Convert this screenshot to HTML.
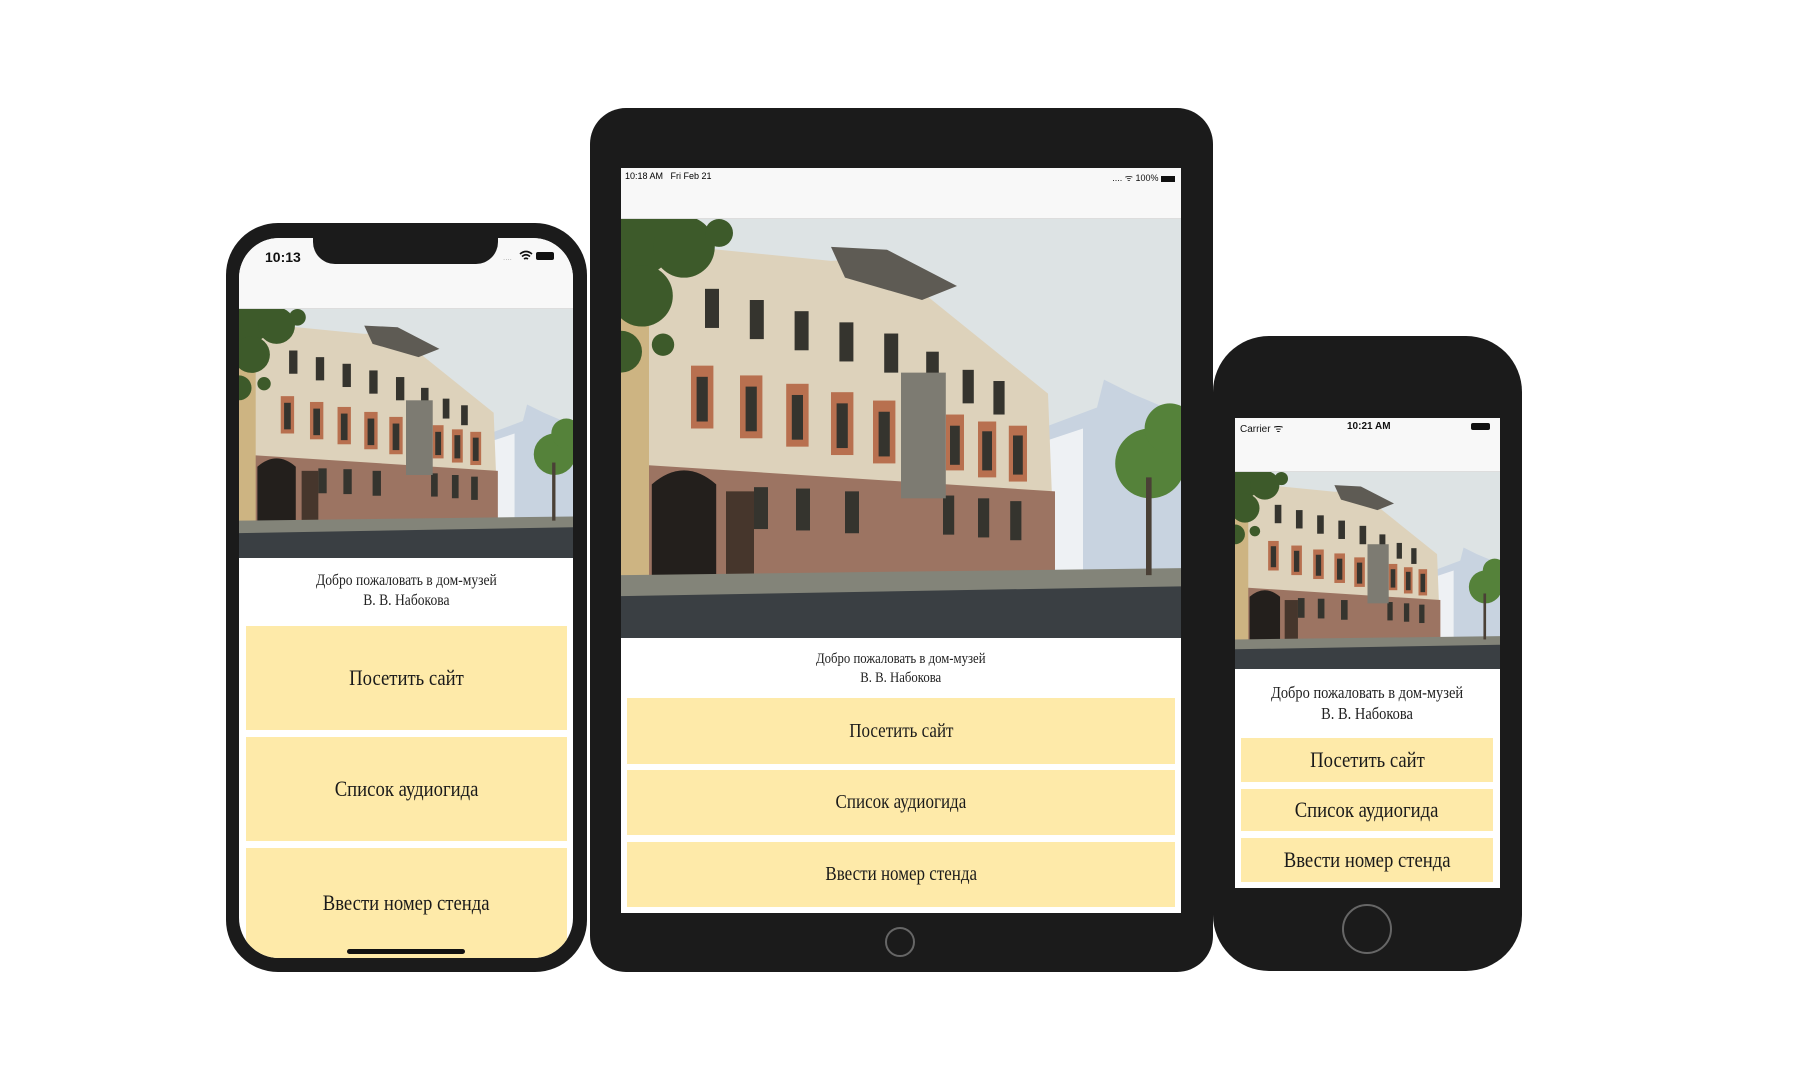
<!DOCTYPE html>
<html><head><meta charset="utf-8"><style>
*{margin:0;padding:0;box-sizing:border-box}
body{width:1800px;height:1080px;background:#fff;position:relative;overflow:hidden;font-family:"Liberation Serif",serif}
.a{position:absolute}
.dev{position:absolute;background:#1b1b1b}
.scr{position:absolute;background:#fff;overflow:hidden}
.bar{position:absolute;left:0;right:0;top:0;background:#f8f8f8;border-bottom:1px solid #ddd;font-family:"Liberation Sans",sans-serif;color:#111}
.img{position:absolute;left:0;right:0}
.img svg{width:100%;height:100%;display:block}
.wel{position:absolute;left:0;right:0;text-align:center;color:#222;line-height:1.25}
.btn{position:absolute;background:#feeaa9;display:flex;align-items:center;justify-content:center;color:#1a1a1a}
.btn span{display:inline-block;transform:scaleX(.85)}
.wel span{display:inline-block;transform:scaleX(.85)}
</style></head><body>
<svg width="0" height="0" style="position:absolute">
<defs>
<symbol id="house" viewBox="0 0 400 300" preserveAspectRatio="none">
<rect width="400" height="300" fill="#dde3e4"/>
<polygon points="300,150 340,135 345,115 365,125 400,140 400,255 290,255" fill="#c8d3e0"/>
<polygon points="300,160 330,150 330,255 300,255" fill="#eef1f4"/>
<polygon points="0,15 150,30 185,28 305,125 310,255 0,255" fill="#ddd2bb"/>
<polygon points="150,20 190,22 240,48 215,58 160,42" fill="#5e5b54"/>
<polygon points="0,175 310,195 310,258 0,258" fill="#9c7462"/>
<rect x="0" y="20" width="20" height="240" fill="#cdb482"/>
<g fill="#b8704f">
<rect x="50" y="105" width="16" height="45"/><rect x="85" y="112" width="16" height="45"/><rect x="118" y="118" width="16" height="45"/><rect x="150" y="124" width="16" height="45"/><rect x="180" y="130" width="16" height="45"/><rect x="232" y="140" width="13" height="40"/><rect x="255" y="145" width="13" height="40"/><rect x="277" y="148" width="13" height="40"/>
</g>
<g fill="#35342e">
<rect x="54" y="113" width="8" height="32"/><rect x="89" y="120" width="8" height="32"/><rect x="122" y="126" width="8" height="32"/><rect x="154" y="132" width="8" height="32"/><rect x="184" y="138" width="8" height="32"/><rect x="235" y="148" width="7" height="28"/><rect x="258" y="152" width="7" height="28"/><rect x="280" y="155" width="7" height="28"/>
<rect x="60" y="50" width="10" height="28"/><rect x="92" y="58" width="10" height="28"/><rect x="124" y="66" width="10" height="28"/><rect x="156" y="74" width="10" height="28"/><rect x="188" y="82" width="10" height="28"/><rect x="218" y="95" width="9" height="26"/><rect x="244" y="108" width="8" height="24"/><rect x="266" y="116" width="8" height="24"/>
<rect x="95" y="192" width="10" height="30"/><rect x="125" y="193" width="10" height="30"/><rect x="160" y="195" width="10" height="30"/><rect x="230" y="198" width="8" height="28"/><rect x="255" y="200" width="8" height="28"/><rect x="278" y="202" width="8" height="28"/>
</g>
<rect x="200" y="110" width="32" height="90" fill="#7d7b72"/>
<path d="M22 260 L22 190 Q45 170 68 190 L68 260Z" fill="#231f1c"/>
<rect x="75" y="195" width="20" height="65" fill="#46362c"/>
<polygon points="0,255 400,250 400,268 0,272" fill="#838479"/>
<polygon points="0,270 400,263 400,300 0,300" fill="#3a3f43"/>
<g fill="#3d5a2a">
<circle cx="5" cy="5" r="38"/><circle cx="45" cy="20" r="22"/><circle cx="15" cy="55" r="22"/><circle cx="70" cy="10" r="10"/><circle cx="0" cy="95" r="15"/><circle cx="30" cy="90" r="8"/>
</g>
<circle cx="378" cy="175" r="25" fill="#55823a"/><circle cx="392" cy="150" r="18" fill="#55823a"/>
<rect x="375" y="185" width="4" height="70" fill="#4a4036"/>
</symbol>
</defs></svg>

<!-- LEFT PHONE -->
<div class="dev" style="left:226px;top:223px;width:361px;height:749px;border-radius:52px"></div>
<div class="scr" style="left:239px;top:238px;width:334px;height:720px;border-radius:40px">
  <div class="bar" style="height:71px"></div>
  <div class="a" style="left:74px;top:-2px;width:185px;height:28px;background:#1b1b1b;border-radius:0 0 22px 22px"></div>
  <div class="a" style="left:26px;top:11px;font:bold 14px 'Liberation Sans',sans-serif;color:#111">10:13</div>
  <svg class="a" style="left:264px;top:12px" width="60" height="12"><text x="0" y="10" font-size="8" fill="#aaa" font-family="Liberation Sans">....</text><path d="M17 4 Q23 -1 29 4 M19 6.5 Q23 3 27 6.5 M21 9 Q23 7.5 25 9" stroke="#111" stroke-width="1.6" fill="none"/><rect x="33" y="2" width="18" height="8" rx="2" fill="#111"/></svg>
  <div class="img" style="top:71px;height:249px"><svg><use href="#house"/></svg></div>
  <div class="wel" style="top:333px;font-size:16px"><span>Добро пожаловать в дом-музей<br>В. В. Набокова</span></div>
  <div class="btn" style="left:7px;top:388px;width:321px;height:104px;font-size:22px"><span>Посетить сайт</span></div>
  <div class="btn" style="left:7px;top:499px;width:321px;height:104px;font-size:22px"><span>Список аудиогида</span></div>
  <div class="btn" style="left:7px;top:610px;width:321px;height:110px;font-size:22px"><span>Ввести номер стенда</span></div>
  <div class="a" style="left:108px;top:711px;width:118px;height:5px;border-radius:3px;background:#111"></div>
</div>

<!-- IPAD -->
<div class="dev" style="left:590px;top:108px;width:623px;height:864px;border-radius:36px"></div>
<div class="scr" style="left:621px;top:168px;width:560px;height:745px">
  <div class="bar" style="height:51px"></div>
  <div class="a" style="left:4px;top:3px;font:9px 'Liberation Sans',sans-serif">10:18 AM&nbsp;&nbsp;&nbsp;Fri Feb 21</div>
  <div class="a" style="right:6px;top:3px;font:9px 'Liberation Sans',sans-serif;color:#111">.... ᯤ 100% <span style="display:inline-block;width:14px;height:6px;background:#111;vertical-align:middle"></span></div>
  <div class="img" style="top:51px;height:419px"><svg><use href="#house"/></svg></div>
  <div class="wel" style="top:482px;font-size:15px"><span>Добро пожаловать в дом-музей<br>В. В. Набокова</span></div>
  <div class="btn" style="left:6px;top:530px;width:548px;height:66px;font-size:20px"><span>Посетить сайт</span></div>
  <div class="btn" style="left:6px;top:602px;width:548px;height:65px;font-size:20px"><span>Список аудиогида</span></div>
  <div class="btn" style="left:6px;top:674px;width:548px;height:65px;font-size:20px"><span>Ввести номер стенда</span></div>
</div>
<div class="a" style="left:885px;top:927px;width:30px;height:30px;border:2px solid #666;border-radius:50%"></div>

<!-- RIGHT PHONE -->
<div class="dev" style="left:1213px;top:336px;width:309px;height:635px;border-radius:56px"></div>
<div class="scr" style="left:1235px;top:418px;width:265px;height:470px">
  <div class="bar" style="height:54px"></div>
  <div class="a" style="left:5px;top:3px;font:10px 'Liberation Sans',sans-serif;color:#111">Carrier <span style="font-size:11px">ᯤ</span></div>
  <div class="a" style="left:112px;top:3px;font:bold 10px 'Liberation Sans',sans-serif;color:#111">10:21 AM</div>
  <div class="a" style="right:10px;top:5px;width:19px;height:7px;background:#111;border-radius:2px"></div>
  <div class="img" style="top:54px;height:197px"><svg><use href="#house"/></svg></div>
  <div class="wel" style="top:264px;font-size:17px"><span>Добро пожаловать в дом-музей<br>В. В. Набокова</span></div>
  <div class="btn" style="left:6px;top:320px;width:252px;height:44px;font-size:22px"><span>Посетить сайт</span></div>
  <div class="btn" style="left:6px;top:371px;width:252px;height:42px;font-size:22px"><span>Список аудиогида</span></div>
  <div class="btn" style="left:6px;top:420px;width:252px;height:44px;font-size:22px"><span>Ввести номер стенда</span></div>
</div>
<div class="a" style="left:1342px;top:904px;width:50px;height:50px;border:2px solid #666;border-radius:50%"></div>
</body></html>
